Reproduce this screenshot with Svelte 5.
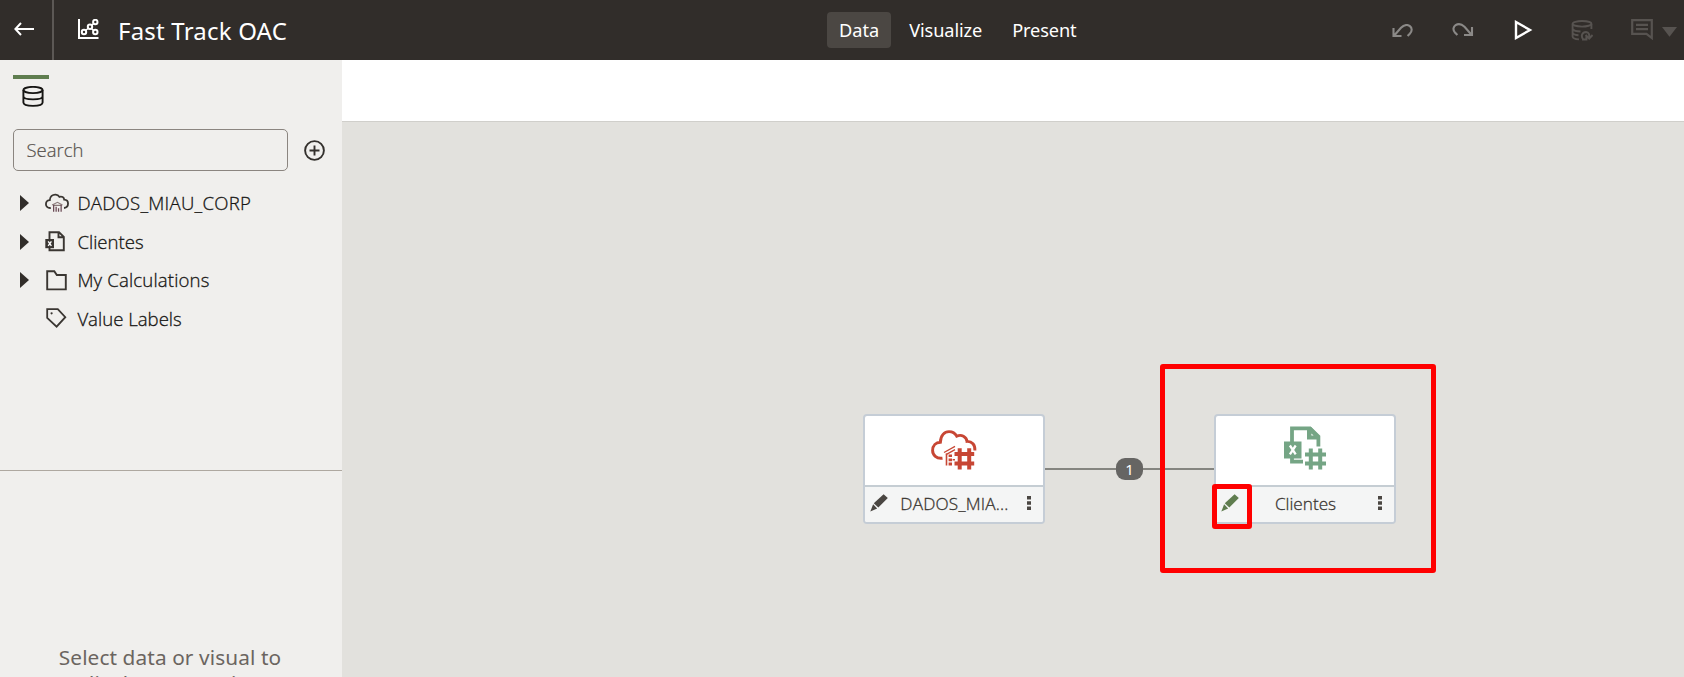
<script>
  const tabs = [
    { label: 'Data', active: true },
    { label: 'Visualize', active: false },
    { label: 'Present', active: false }
  ];
  const items = [
    { label: 'DADOS_MIAU_CORP', icon: 'cloud', open: true, cls: 'caps' },
    { label: 'Clientes', icon: 'sheet', open: true, cls: '' },
    { label: 'My Calculations', icon: 'folder', open: true, cls: 'loose' },
    { label: 'Value Labels', icon: 'tag', open: false, cls: '' }
  ];
</script>

{#snippet pencil(color)}
  <svg class="pencil" width="18" height="18" viewBox="0 0 18 18" fill={color}>
    <path d="M13.6 0.2 L17.8 4.1 L8.3 13.5 L3.8 9.2 Z" />
    <path d="M3.1 10.3 L7.2 14.4 L0.3 17.6 Z" />
  </svg>
{/snippet}

{#snippet kebab()}
  <svg class="kebab" width="4" height="14" viewBox="0 0 4 14" fill="#4a4642">
    <path d="M0 0h4v3.6H0zM0 5.2h4v3.6H0zM0 10.4h4V14H0z" />
  </svg>
{/snippet}

<div class="app">
  <header>
    <div class="back">
      <svg width="20" height="14" viewBox="0 0 20 14" fill="none" stroke="#fff" stroke-width="2">
        <path d="M7 1 L1.4 7 L7 13 M1.4 7 H20" />
      </svg>
    </div>
    <div class="brand">
      <svg width="21" height="21" viewBox="0 0 21 21" fill="none" stroke="#fff" stroke-width="2">
        <path d="M1 0 V19 H20.5" />
        <path d="M7.5 11.4 L10.5 9.2 M13.7 6.2 L15.7 4.5 M13.4 9.4 L15.6 11.6" stroke-width="1.4" />
        <circle cx="6" cy="13" r="2.2" />
        <circle cx="12" cy="7.8" r="2.2" />
        <circle cx="17.3" cy="3" r="2.2" />
        <circle cx="17.3" cy="13" r="2.2" />
      </svg>
      <h1>Fast Track OAC</h1>
    </div>
    <nav>
      {#each tabs as tab}
        <button class:active={tab.active}>{tab.label}</button>
      {/each}
    </nav>
    <div class="tools">
      <svg width="22" height="16" viewBox="0 0 22 16" fill="none" stroke="#8b8987" stroke-width="2.1">
        <path d="M1.5 4 V12 H9.5 M2 11.7 L9 3.8 C15.5 -3 23.3 4 17.8 9.8 L15.6 12" />
      </svg>
      <svg width="22" height="16" viewBox="0 0 22 16" fill="none" stroke="#8b8987" stroke-width="2.1">
        <path d="M20 4 V12 H12 M19.5 11.7 L12.5 3.8 C6 -2.4 -1.5 4 2.7 9.2 L5.4 12" />
      </svg>
      <svg width="19" height="20" viewBox="0 0 19 20" fill="none" stroke="#fff" stroke-width="2.4">
        <path d="M2 2 L16 10 L2 18 Z" />
      </svg>
      <svg width="22" height="21" viewBox="0 0 22 21" fill="none" stroke="#575350" stroke-width="1.9">
        <ellipse cx="11" cy="3.8" rx="9.4" ry="2.8" />
        <path d="M1.6 4 V16.4 C1.6 18 4 19 8 19.4 M20.4 4 V9 M1.6 9 C2.6 10.6 5 11.4 9.5 11.5 M1.6 13 C2.4 14.4 4.5 15 7.5 15.2" />
        <path d="M12.4 19.6 C9.2 16 11.5 12 15 12 C18 12.2 18.6 14.6 18.2 18 M14.6 15 L18.2 18.6 L21.6 15 M11 19.4 H15.4 V16.4" stroke-width="2" />
      </svg>
      <div class="comment">
        <svg width="22" height="21" viewBox="0 0 22 21" fill="none" stroke="#575350" stroke-width="2.2">
          <path d="M1.2 1.2 H20.8 V19 L15.5 14.9 H1.2 Z M5 5.8 H17 M5 10.2 H17" />
        </svg>
        <svg width="15" height="10" viewBox="0 0 15 10" fill="#575350"><path d="M0 0 H15 L7.5 9.7 Z" /></svg>
      </div>
    </div>
  </header>

  <div class="body">
    <aside>
      <div class="data-pane">
        <div class="source-tab">
          <svg width="22" height="21" viewBox="0 0 22 21" fill="none" stroke="#161513" stroke-width="1.9">
            <ellipse cx="11" cy="4" rx="9.6" ry="3.1" />
            <path d="M1.4 4 V16.6 C1.4 20.9 20.6 20.9 20.6 16.6 V4 M1.4 10.2 C1.4 14.4 20.6 14.4 20.6 10.2" />
          </svg>
        </div>
        <div class="search-row">
          <div class="search">Search</div>
          <svg width="21" height="21" viewBox="0 0 21 21" fill="none" stroke="#33302d" stroke-width="1.9">
            <circle cx="10.5" cy="10.5" r="9.4" />
            <path d="M10.5 5.5 V15.5 M5.5 10.5 H15.5" />
          </svg>
        </div>
        <ul>
          {#each items as item}
            <li>
              <span class="arrow">
                {#if item.open}
                  <svg width="9" height="16" viewBox="0 0 9 16" fill="#312d2a"><path d="M0 0 L9 8 L0 16 Z" /></svg>
                {/if}
              </span>
              <span class="icon">
                {#if item.icon === 'cloud'}
                  <svg width="24" height="20" viewBox="0 0 25 20" fill="none" stroke="#3a3632" stroke-width="1.9">
                    <path d="M6 15.2 C2.6 15.6 0.9 13.2 1 11 C1 8.6 2.8 7 5 7 C5 3.2 8 1 11 1.2 C13 1.3 14.2 2.2 15 3.6 C17.6 2.6 19.8 4.2 20 6.4 C22.5 6.5 24 8.3 24 10.6 C24 13.3 22.3 15 19.8 15.2" />
                    <path d="M7.4 12 L13 9.3 L18.2 12 M8.8 12.5 H17" stroke="#8a7a7a" stroke-width="1.2" />
                    <path d="M9 12 V19 M11.6 14 V19 M14.1 15.5 V19 M16.8 12 V19" stroke="#6a4a55" stroke-width="1.3" />
                  </svg>
                {:else if item.icon === 'sheet'}
                  <svg width="21" height="21" viewBox="0 0 21 21" fill="none" stroke="#3a3632" stroke-width="1.9">
                    <path d="M4.5 8 V1.2 H14 L18.8 6 V19.2 H4.5 V16 M13.5 1.2 V6.3 H19" />
                    <path d="M0.3 8 H9 V17.2 H0.3 Z" fill="#3a3632" stroke="none" />
                    <path d="M3.2 10.3 L6.4 14.8 M6.4 10.3 L3.2 14.8" stroke="#fff" stroke-width="1.4" />
                  </svg>
                {:else if item.icon === 'folder'}
                  <svg class="nudge" width="21" height="21" viewBox="0 0 21 21" fill="none" stroke="#3a3632" stroke-width="1.9">
                    <path d="M1.2 1.2 H8.3 L10.8 5 H19.8 V19.4 H1.2 Z" />
                  </svg>
                {:else}
                  <svg class="nudge" width="21" height="21" viewBox="0 0 21 21" fill="none" stroke="#3a3632" stroke-width="1.8">
                    <path d="M1.2 1.2 H11.8 L19.3 9.2 L10.6 18.6 L1.2 9.8 Z" />
                    <circle cx="5.6" cy="5.3" r="1.1" fill="#3a3632" stroke="none" />
                  </svg>
                {/if}
              </span>
              <span class={['name', item.cls]}>{item.label}</span>
            </li>
          {/each}
        </ul>
      </div>
      <div class="hint">Select data or visual to<br />display properties</div>
    </aside>

    <main>
      <div class="strip"></div>
      <div class="canvas">
        <div class="link"></div>
        <div class="badge">1</div>

        <div class="node dados">
          <div class="art">
            <svg width="46" height="42" viewBox="0 0 46 42" fill="none" stroke="#c74634" stroke-width="2.9">
              <path d="M11.5 28.2 C5.5 29 1.6 25 1.6 20.5 C1.6 15.5 5 12.3 9.4 12.2 C9.5 5.5 13.5 1.6 18 1.6 C22 1.6 24.3 3.5 25.7 6.2 C30.5 4 35.5 6.8 36 11.4 C41 11.2 44.3 15 43.9 20.5" />
              <path d="M13 22.5 L24 16.4" stroke-width="1.3" />
              <path d="M15 24.6 L24 19.6" stroke-width="1.3" />
              <path d="M15.5 23.5 V35.5" stroke-width="1.6" />
              <path d="M17.6 24.5 H21 V27 H17.6 Z M17.6 28.4 H21 V31.2 H17.6 Z M17.6 32.6 H21 V35.5 H17.6 Z M21.6 29 H24 V30.4 H21.6 Z" fill="#c74634" stroke="none" />
              <path d="M28.7 18.3 V39.5 M38.2 18.3 V39.5 M23.5 24 H43.2 M23.5 33.6 H43.2" stroke-width="4" />
            </svg>
          </div>
          <footer>{@render pencil('#4a4642')}<span class="wide">DADOS_MIA...</span>{@render kebab()}</footer>
        </div>

        <div class="node clientes">
          <div class="art">
            <svg width="43" height="45" viewBox="0 0 43 45" fill="none" stroke="#75a585" stroke-width="3.8">
              <path d="M8 16 V2.4 H26 L34.4 10.5 V20.5 M8 31 V35.6 H19" />
              <path d="M23 1 V13.5 H35.5 V10 L27 1 Z M27.4 7.4 V9.6 H29.6 Z" fill="#75a585" fill-rule="evenodd" stroke="none" />
              <path d="M0 15.5 H17.5 V32.5 H0 Z" fill="#75a585" stroke="none" />
              <path d="M5.9 19.5 L11.7 28.3 M11.7 19.5 L5.9 28.3" stroke="#fff" stroke-width="2.3" />
              <path d="M26.8 22.5 V43.5 M36.2 22.5 V43.5 M21 28.5 H42 M21 37.6 H42" stroke-width="4" />
            </svg>
          </div>
          <footer>{@render pencil('#5f7d4f')}<span>Clientes</span>{@render kebab()}</footer>
        </div>

        <div class="mark large"></div>
        <div class="mark small"></div>
      </div>
    </main>
  </div>
</div>

<style>
  .app {
    width: 1684px;
    height: 677px;
    overflow: hidden;
    display: flex;
    flex-direction: column;
    font-family: "Noto Sans", "Open Sans", sans-serif;
    color: #161513;
  }
  svg { display: block; flex: none; }
  header {
    height: 60px;
    flex: none;
    background: #312d2a;
    color: #fff;
    display: flex;
  }
  .back {
    width: 52px;
    border-right: 2px solid #5c5855;
  }
  .back svg { margin: 22px 0 0 14px; }
  .brand { display: flex; padding-left: 24px; width: 749px; box-sizing: border-box; }
  .brand svg { margin-top: 19px; }
  h1 {
    margin: 0 0 0 19px;
    font-size: 24px;
    font-weight: 400;
    line-height: 62px;
    letter-spacing: 0.2px;
    white-space: nowrap;
  }
  nav { display: flex; padding: 12px 0 0 24px; gap: 6px; height: 36px; }
  button {
    font: 400 18.2px/35px "Noto Sans", sans-serif;
    height: 36px;
    border: 0;
    border-radius: 4px;
    background: none;
    color: #fff;
    padding: 0 12px;
    letter-spacing: -0.12px;
  }
  button.active { background: #4b4743; letter-spacing: 0; }
  .tools { display: flex; align-items: flex-start; margin-left: auto; padding-right: 7px; }
  .tools > :nth-child(1) { margin: 24px 38px 0 0; }
  .tools > :nth-child(2) { margin: 23px 40px 0 0; }
  .tools > :nth-child(3) { margin: 20px 38px 0 0; }
  .tools > :nth-child(4) { margin: 20px 38px 0 0; }
  .comment { display: flex; gap: 9px; padding-top: 19px; }
  .comment :last-child { margin-top: 8px; }

  .body { flex: 1; display: flex; min-height: 0; }
  aside { width: 342px; flex: none; background: #f0efed; overflow: hidden; }
  .data-pane { height: 395px; border-bottom: 1px solid #aea8a0; padding: 15px 0 0 13px; }
  .source-tab { width: 36px; height: 54px; border-top: 4px solid #5f7d4f; box-sizing: border-box; }
  .source-tab svg { margin: 7px 0 0 8.5px; }
  .search-row { display: flex; align-items: flex-start; gap: 15.5px; }
  .search-row svg { margin-top: 10.5px; }
  .search {
    width: 275px;
    height: 42px;
    box-sizing: border-box;
    border: 1px solid #8b8580;
    border-radius: 5px;
    padding-left: 12.5px;
    font: 300 18.5px/40px "Open Sans", "Noto Sans", sans-serif;
    -webkit-text-stroke: 0.2px #55504c;
    color: #55504c;
  }
  ul { list-style: none; margin: 13px 0 0; padding: 0; }
  li { display: flex; align-items: center; height: 38.5px; }
  .arrow { padding-left: 7.4px; width: 25px; }
  .icon { width: 32px; }
  .nudge { margin-left: 1px; }
  .name {
    font: 300 18.6px/38px "Open Sans", "Noto Sans", sans-serif;
    -webkit-text-stroke: 0.3px #161513;
    white-space: nowrap;
  }
  .name.caps { letter-spacing: 0.25px; }
  .name.loose { letter-spacing: 0.15px; }
  .hint {
    text-align: center;
    font-size: 20.8px;
    line-height: 26px;
    letter-spacing: 0.1px;
    padding: 173px 2px 0 0;
    color: #6b6560;
    white-space: nowrap;
  }

  main { flex: 1; display: flex; flex-direction: column; }
  .strip { height: 62px; box-sizing: border-box; background: #fff; border-bottom: 1px solid #d0cfcb; }
  .canvas { flex: 1; background: #e2e1dd; position: relative; }
  .link { position: absolute; left: 703px; top: 346px; width: 170px; height: 2px; background: #858580; }
  .badge {
    position: absolute;
    left: 774px;
    top: 336px;
    width: 27px;
    height: 22px;
    border-radius: 9px;
    background: #666563;
    color: #fff;
    text-align: center;
    font-size: 15px;
    line-height: 22px;
  }
  .node {
    position: absolute;
    top: 292px;
    width: 182px;
    height: 110px;
    box-sizing: border-box;
    border: 2px solid #c5cdd6;
    border-radius: 4px;
    background: #fff;
    overflow: hidden;
  }
  .dados { left: 521px; }
  .clientes { left: 872px; }
  .art { height: 69px; box-sizing: border-box; }
  .dados .art { padding: 14px 0 0 66px; }
  .clientes .art { padding: 10px 0 0 68px; }
  .node footer {
    height: 37px;
    border-top: 2px solid #c5cdd3;
    box-sizing: border-box;
    background: #f4f5f5;
    display: flex;
    padding: 0 12px 0 5px;
    color: #3a3632;
  }
  footer span {
    flex: 1;
    margin-left: -6px;
    text-align: center;
    font: 300 17.2px/33px "Open Sans", "Noto Sans", sans-serif;
    -webkit-text-stroke: 0.3px #3a3632;
    white-space: nowrap;
  }
  footer .wide { letter-spacing: 0.2px; }
  footer .pencil { margin-top: 7px; }
  footer .kebab { margin-top: 9px; }
  .mark { position: absolute; box-sizing: border-box; border: 5px solid #f00; border-radius: 3px; }
  .large { left: 818px; top: 242px; width: 276px; height: 209px; }
  .small { left: 870px; top: 362px; width: 40px; height: 45px; }
</style>
